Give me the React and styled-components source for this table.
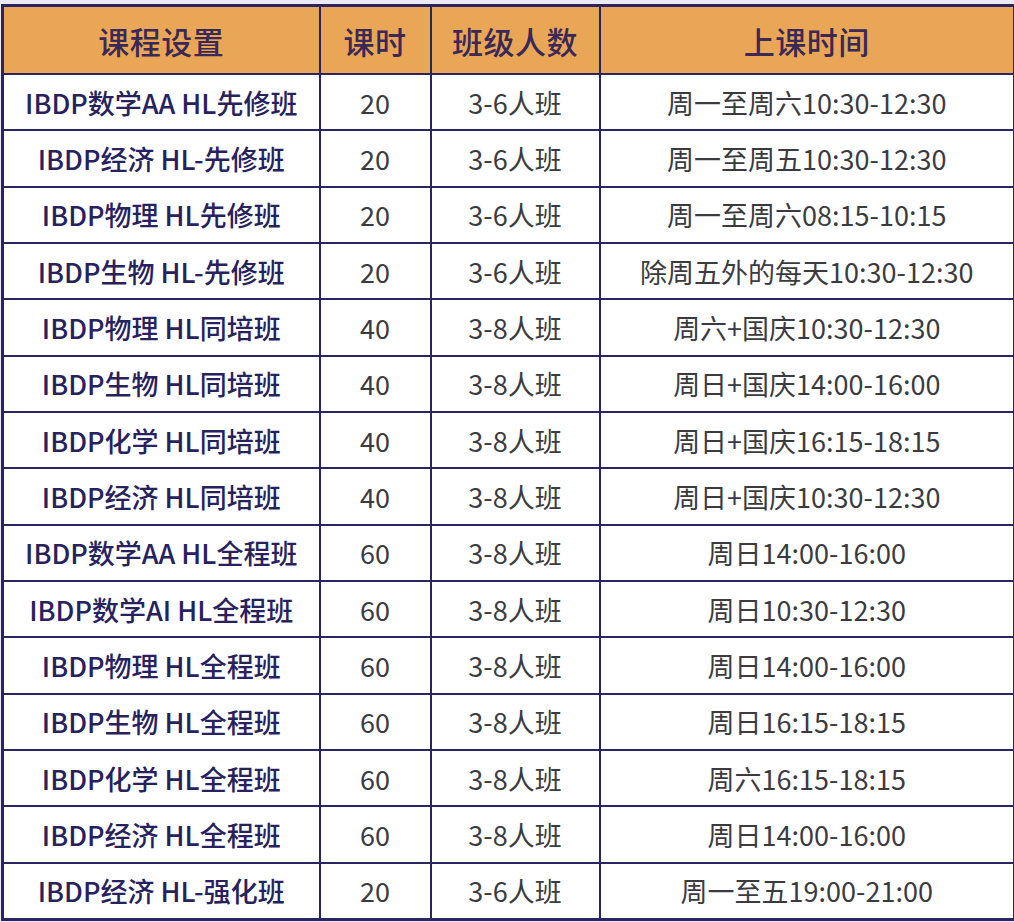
import React from 'react'
import styled, { createGlobalStyle } from 'styled-components'

const GlobalStyle = createGlobalStyle`
  html, body {
    margin: 0;
    padding: 0;
    background: #ecebf5;
  }
  body {
    font-family: "Noto Sans CJK SC", "Noto Sans", sans-serif;
  }
`

const Page = styled.div`
  padding: 4px 1px 0 1px;
  width: 1012px;
`

const Table = styled.table`
  width: 1012px;
  border-collapse: collapse;
  table-layout: fixed;
  background: #ffffff;
  border: 3px solid #2a2560;
`

const HeadCell = styled.th`
  height: 66px;
  padding: 0;
  background: #e9a657;
  color: #3a2856;
  font-size: 31px;
  font-weight: 500;
  text-align: center;
  border: 2px solid #2a2560;
  letter-spacing: 0.5px;
`

const Cell = styled.td`
  height: 54.35px;
  padding: 0;
  text-align: center;
  border: 2px solid #2a2560;
  font-size: 27px;
  white-space: nowrap;
  color: ${p => (p.$course ? '#27225e' : '#3b3b3f')};
  font-weight: ${p => (p.$course ? 500 : 400)};
`

const columns = [
  { label: '课程设置', width: 317 },
  { label: '课时', width: 111 },
  { label: '班级人数', width: 169 },
  { label: '上课时间', width: 415 },
]

const rows = [
  ['IBDP数学AA HL先修班', '20', '3-6人班', '周一至周六10:30-12:30'],
  ['IBDP经济 HL-先修班', '20', '3-6人班', '周一至周五10:30-12:30'],
  ['IBDP物理 HL先修班', '20', '3-6人班', '周一至周六08:15-10:15'],
  ['IBDP生物 HL-先修班', '20', '3-6人班', '除周五外的每天10:30-12:30'],
  ['IBDP物理 HL同培班', '40', '3-8人班', '周六+国庆10:30-12:30'],
  ['IBDP生物 HL同培班', '40', '3-8人班', '周日+国庆14:00-16:00'],
  ['IBDP化学 HL同培班', '40', '3-8人班', '周日+国庆16:15-18:15'],
  ['IBDP经济 HL同培班', '40', '3-8人班', '周日+国庆10:30-12:30'],
  ['IBDP数学AA HL全程班', '60', '3-8人班', '周日14:00-16:00'],
  ['IBDP数学AI HL全程班', '60', '3-8人班', '周日10:30-12:30'],
  ['IBDP物理 HL全程班', '60', '3-8人班', '周日14:00-16:00'],
  ['IBDP生物 HL全程班', '60', '3-8人班', '周日16:15-18:15'],
  ['IBDP化学 HL全程班', '60', '3-8人班', '周六16:15-18:15'],
  ['IBDP经济 HL全程班', '60', '3-8人班', '周日14:00-16:00'],
  ['IBDP经济 HL-强化班', '20', '3-6人班', '周一至五19:00-21:00'],
]

export default function App() {
  return (
    <Page>
      <GlobalStyle />
      <Table>
        <colgroup>
          {columns.map(c => (
            <col key={c.label} style={{ width: c.width }} />
          ))}
        </colgroup>
        <thead>
          <tr>
            {columns.map(c => (
              <HeadCell key={c.label}>{c.label}</HeadCell>
            ))}
          </tr>
        </thead>
        <tbody>
          {rows.map((r, i) => (
            <tr key={i}>
              {r.map((v, j) => (
                <Cell key={j} $course={j === 0}>{v}</Cell>
              ))}
            </tr>
          ))}
        </tbody>
      </Table>
    </Page>
  )
}
